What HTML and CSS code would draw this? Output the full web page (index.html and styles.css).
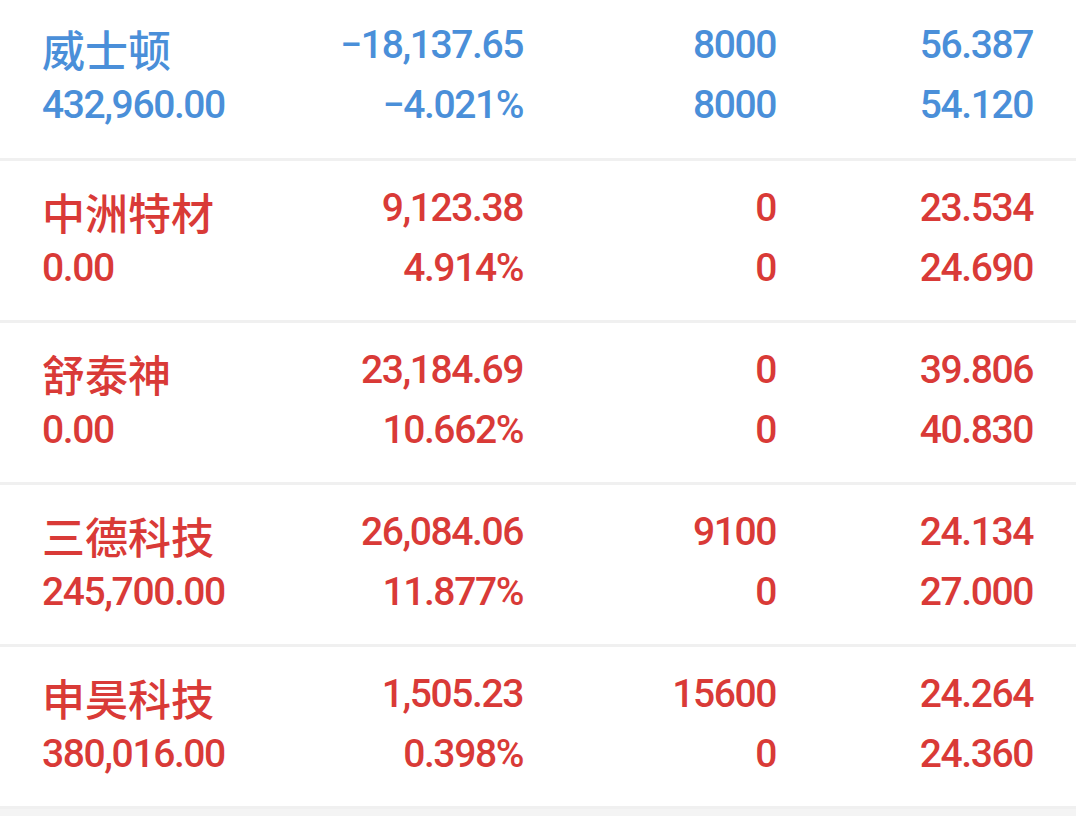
FILE: index.html
```html
<!DOCTYPE html>
<html lang="zh-CN">
<head>
<meta charset="utf-8">
<title>持仓列表</title>
<link rel="stylesheet" href="styles.css">
</head>
<body>
<div class="list">
  <div class="row row-first down">
    <div class="cell name-cell"><div class="name">威士顿</div><div class="num">432,960.00</div></div>
    <div class="cell right"><div class="num">−18,137.65</div><div class="num">−4.021%</div></div>
    <div class="cell right"><div class="num">8000</div><div class="num">8000</div></div>
    <div class="cell right"><div class="num">56.387</div><div class="num">54.120</div></div>
  </div>
  <div class="row up">
    <div class="cell name-cell"><div class="name">中洲特材</div><div class="num">0.00</div></div>
    <div class="cell right"><div class="num">9,123.38</div><div class="num">4.914%</div></div>
    <div class="cell right"><div class="num">0</div><div class="num">0</div></div>
    <div class="cell right"><div class="num">23.534</div><div class="num">24.690</div></div>
  </div>
  <div class="row up">
    <div class="cell name-cell"><div class="name">舒泰神</div><div class="num">0.00</div></div>
    <div class="cell right"><div class="num">23,184.69</div><div class="num">10.662%</div></div>
    <div class="cell right"><div class="num">0</div><div class="num">0</div></div>
    <div class="cell right"><div class="num">39.806</div><div class="num">40.830</div></div>
  </div>
  <div class="row up">
    <div class="cell name-cell"><div class="name">三德科技</div><div class="num">245,700.00</div></div>
    <div class="cell right"><div class="num">26,084.06</div><div class="num">11.877%</div></div>
    <div class="cell right"><div class="num">9100</div><div class="num">0</div></div>
    <div class="cell right"><div class="num">24.134</div><div class="num">27.000</div></div>
  </div>
  <div class="row up">
    <div class="cell name-cell"><div class="name">申昊科技</div><div class="num">380,016.00</div></div>
    <div class="cell right"><div class="num">1,505.23</div><div class="num">0.398%</div></div>
    <div class="cell right"><div class="num">15600</div><div class="num">0</div></div>
    <div class="cell right"><div class="num">24.264</div><div class="num">24.360</div></div>
  </div>
</div>
</body>
</html>
```

FILE: styles.css
```css
html, body {
  margin: 0;
  padding: 0;
  background: #f4f4f4;
}

body {
  width: 1076px;
  height: 816px;
  overflow: hidden;
  font-family: Roboto, "Noto Sans CJK SC", sans-serif;
}

.list {
  display: flex;
  flex-direction: column;
}

.row {
  display: grid;
  grid-template-columns: 230px 250px 253px 257px;
  padding: 17px 44px 0 42px;
  height: 162px;
  box-sizing: border-box;
  background: #ffffff;
  border-bottom: 3px solid #f0f0f0;
}

.row-first {
  height: 161px;
  padding-top: 15px;
}

.down { color: #4a8fd9; }
.up { color: #d93a37; }

.cell {
  display: flex;
  flex-direction: column;
}

.right {
  align-items: flex-end;
}

.num {
  font-family: Roboto, sans-serif;
  font-size: 39px;
  font-weight: 500;
  line-height: 60px;
  height: 60px;
  letter-spacing: -1.4px;
  white-space: nowrap;
}

.right .num {
  margin-right: -1px;
}

.name {
  font-family: "Noto Sans CJK SC", sans-serif;
  font-size: 43px;
  font-weight: 500;
  line-height: 60px;
  height: 60px;
  padding-top: 3px;
  margin-bottom: -3px;
  white-space: nowrap;
}
```
